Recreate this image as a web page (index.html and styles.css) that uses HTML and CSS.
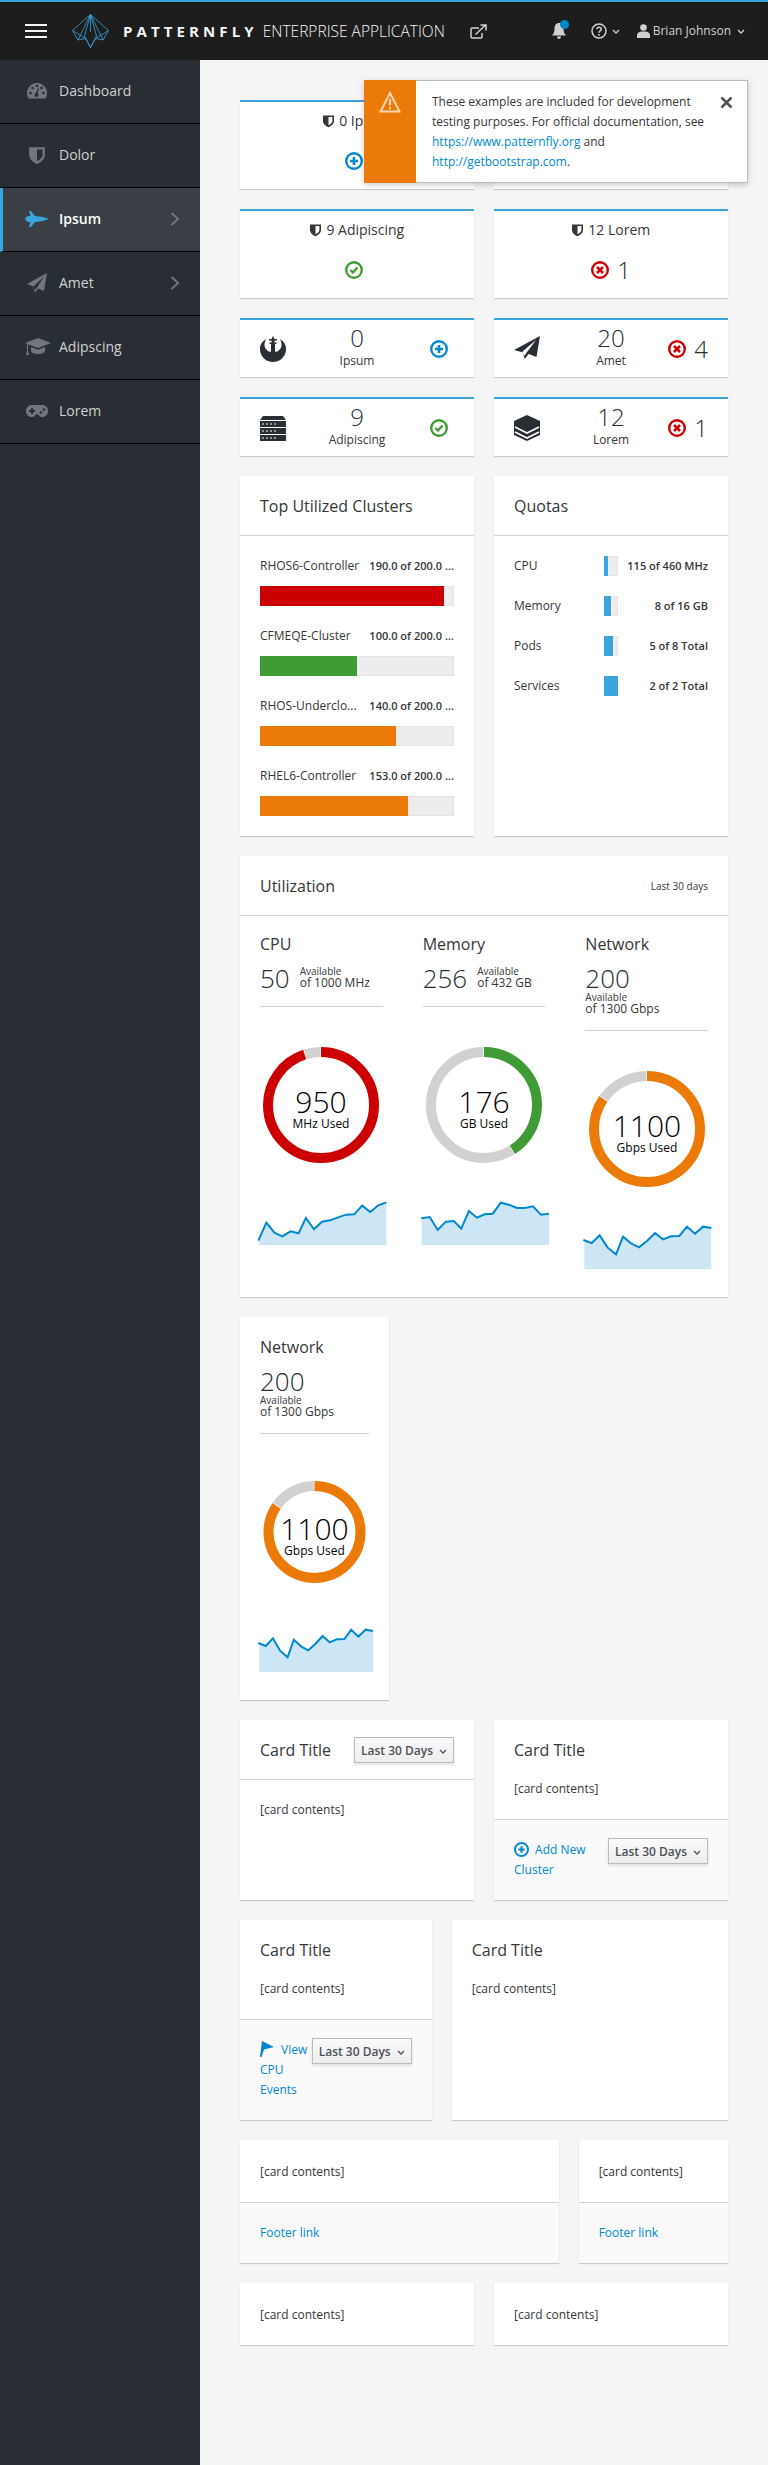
FILE: index.html
```html
<!DOCTYPE html>
<html lang="en">
<head>
    <meta charset="UTF-8">
    <title>Cards</title>
    <link rel="stylesheet" href="styles.css">
</head>
<body>
    <header class="topbar">
        <div class="hamburger"><span></span><span></span><span></span></div>
        <svg class="logo" viewBox="0 0 37 34" fill="none" stroke="#39a5dc" stroke-width="0.8">
            <path d="M18.500 0.500L36.500 16.500 31 26 23.500 24.500 18.500 33.500 13.500 24.500 6 26 0.500 16.500z"/>
            <path d="M18.500 0.500L6 26M18.500 0.500L12.500 22 18.500 33.500 24.500 22zM18.500 0.500L31 26M18.500 0.500V18"/>
            <path d="M0.500 16.500L13.500 24.500M36.500 16.500L23.500 24.500"/>
        </svg>
        <span class="brand-name">PATTERNFLY</span>
        <span class="brand-app">ENTERPRISE APPLICATION</span>
        <svg class="ext-link" viewBox="0 0 17 15" fill="none" stroke="#d1d1d1" stroke-width="1.500">
            <path d="M9 4H2a1 1 0 0 0-1 1v8a1 1 0 0 0 1 1h9a1 1 0 0 0 1-1V9"/>
            <path d="M5.500 10.500L15 1.500M10.500 1H16V6.500"/>
        </svg>
        <div class="nav-right">
            <span class="bell">
                <svg viewBox="0 0 16 18" fill="#d1d1d1"><path d="M8 1c3 0 4.500 2.500 4.500 5.500 0 4 1 5.500 2.500 7H1c1.500-1.500 2.500-3 2.500-7C3.500 3.500 5 1 8 1zM6 14.500h4c0 1.500-1 2.500-2 2.500s-2-1-2-2.500z"/></svg>
                <i class="bell-dot"></i>
            </span>
            <span class="help">
                <svg viewBox="0 0 16 16" fill="none" stroke="#d1d1d1" stroke-width="1.500"><circle cx="8" cy="8" r="7"/><path d="M5.800 6.200C6 4.800 7 4.200 8 4.200c1.300 0 2.300 .8 2.300 2 0 1.800-2.300 1.800-2.300 3.500"/><path d="M8 11v1.800"/></svg>
                <svg class="caret" viewBox="0 0 8 5" fill="none" stroke="#d1d1d1" stroke-width="1.300"><path d="M1 1l3 3 3-3"/></svg>
            </span>
            <span class="user">
                <svg viewBox="0 0 13 14" fill="#d1d1d1"><circle cx="6.500" cy="3.500" r="3.300"/><path d="M0 14v-3c0-2 2-3 4-3.500h5c2 .5 4 1.500 4 3.500v3z"/></svg>
                Brian Johnson
                <svg class="caret" viewBox="0 0 8 5" fill="none" stroke="#d1d1d1" stroke-width="1.300"><path d="M1 1l3 3 3-3"/></svg>
            </span>
        </div>
    </header>

    <div class="layout">
        <nav class="sidebar">
            <a class="nav-item">
                <svg class="nav-icon" viewBox="0 0 20 18"><path class="ic" d="M10 1C4.500 1 0 5.500 0 11c0 2 .5 4 1.500 5.500h17C19.500 15 20 13 20 11 20 5.500 15.500 1 10 1z"/><g fill="#292e34"><circle cx="3.500" cy="11" r="1.300"/><circle cx="5.500" cy="6" r="1.300"/><circle cx="10" cy="4" r="1.300"/><circle cx="16.500" cy="11" r="1.300"/><circle cx="14.500" cy="6" r="1.300"/><circle cx="9.500" cy="13" r="2"/><path d="M8.500 12.500L11 6l.8 .3-1.300 6.700z"/></g></svg>
                Dashboard
            </a>
            <a class="nav-item">
                <svg class="nav-icon shield-nav" viewBox="0 0 14 16"><use href="#shield"/></svg>
                Dolor
            </a>
            <a class="nav-item active">
                <svg class="nav-icon" viewBox="0 0 24 16"><path d="M4 0h2l4 5 7 .8L24 8l-7 2.200-7 .8-4 5H4l1.500-5H3L1.500 10 0 8l1.500-2L3 5h2.500z" fill="#39a5dc"/></svg>
                Ipsum
                <svg class="chevron" viewBox="0 0 10 14"><path d="M1.500 1l6.500 6-6.500 6"/></svg>
            </a>
            <a class="nav-item">
                <svg class="nav-icon tall" viewBox="0 0 20 20"><path class="ic" d="M20 0L17 18l-6-2.500L8 20l-1.500-6.500L0 11zM17 3.500L6.500 13.500 8 17l2-2.500z"/></svg>
                Amet
                <svg class="chevron" viewBox="0 0 10 14"><path d="M1.500 1l6.500 6-6.500 6"/></svg>
            </a>
            <a class="nav-item">
                <svg class="nav-icon wide" viewBox="0 0 26 18"><path class="ic" d="M13 0l13 5-13 5L3 6.200V13l1 4H1l1-4V5.800L0 5zM6 9l7 2.700L20 9v3.500c0 2-3 3.500-7 3.500s-7-1.500-7-3.500z"/></svg>
                Adipscing
            </a>
            <a class="nav-item">
                <svg class="nav-icon pad" viewBox="0 0 22 12"><path class="ic" d="M6 0h10c3.500 0 6 2.500 6 6s-2.500 6-6 6c-2 0-3-1.500-4-2.500h-2C9 10.500 8 12 6 12c-3.500 0-6-2.500-6-6s2.500-6 6-6z"/><path fill="#292e34" d="M5 3h2v2h2v2H7v2H5V7H3V5h2z"/><circle cx="15" cy="7.500" r="1.300" fill="#292e34"/><circle cx="18" cy="4.500" r="1.300" fill="#292e34"/></svg>
                Lorem
            </a>
        </nav>

        <main class="content">
            <div class="row">
                <section class="card accent col-6">
                    <h2 class="agg-title"><svg class="shield" viewBox="0 0 14 16"><use href="#shield"/></svg> 0 Ipsum</h2>
                    <div class="agg-body"><svg class="status" viewBox="0 0 18 18"><use href="#add-o"/></svg></div>
                </section>
                <section class="card accent col-6">
                    <h2 class="agg-title"><svg class="shield" viewBox="0 0 14 16"><use href="#shield"/></svg> 20 Amet</h2>
                    <div class="agg-body"><svg class="status" viewBox="0 0 18 18"><use href="#error-o"/></svg><span class="count">4</span></div>
                </section>
            </div>

            <div class="row">
                <section class="card accent col-6">
                    <h2 class="agg-title"><svg class="shield" viewBox="0 0 14 16"><use href="#shield"/></svg> 9 Adipiscing</h2>
                    <div class="agg-body"><svg class="status" viewBox="0 0 18 18"><use href="#ok-o"/></svg></div>
                </section>
                <section class="card accent col-6">
                    <h2 class="agg-title"><svg class="shield" viewBox="0 0 14 16"><use href="#shield"/></svg> 12 Lorem</h2>
                    <div class="agg-body"><svg class="status" viewBox="0 0 18 18"><use href="#error-o"/></svg><span class="count">1</span></div>
                </section>
            </div>

            <div class="row">
                <section class="card accent mini col-6">
                    <svg class="mini-icon" viewBox="0 0 26 26"><path d="M6 3C1 6 0 10 0 13a13 13 0 0 0 26 0C26 10 25 6 20 3 22 7 22 11 20 13 18 16 16 16 15 15.500V8h1.500V6.500h-2v-2H17V3h-2.500L13 0l-1.500 3H9v1.500h2.500v2h-2V8H11v7.500C10 16 8 16 6 13 4 11 4 7 6 3z"/></svg>
                    <div class="mini-center"><div class="mini-num">0</div><div class="mini-label">Ipsum</div></div>
                    <div class="mini-right"><svg class="status" viewBox="0 0 18 18"><use href="#add-o"/></svg></div>
                </section>
                <section class="card accent mini col-6">
                    <svg class="mini-icon" viewBox="0 0 26 26"><path d="M26 0L22.500 21 14.800 18 10.500 23 9 16.500 0 14zM22 4L8.500 15.500 10.500 20 12.500 16.800z"/></svg>
                    <div class="mini-center"><div class="mini-num">20</div><div class="mini-label">Amet</div></div>
                    <div class="mini-right"><svg class="status" viewBox="0 0 18 18"><use href="#error-o"/></svg><span class="count">4</span></div>
                </section>
            </div>

            <div class="row">
                <section class="card accent mini col-6">
                    <svg class="mini-icon" viewBox="0 0 26 26"><path d="M3 1h20l3 4H0zM0 6h26v6H0zM0 13h26v6H0zM0 20h26v6H0z"/><g fill="#fff"><rect x="2" y="8.500" width="2" height="1"/><rect x="6" y="8.500" width="2" height="1"/><rect x="10" y="8.500" width="2" height="1"/><rect x="14" y="8.500" width="2" height="1"/><rect x="2" y="15.500" width="2" height="1"/><rect x="6" y="15.500" width="2" height="1"/><rect x="10" y="15.500" width="2" height="1"/><rect x="14" y="15.500" width="2" height="1"/><rect x="2" y="22.500" width="2" height="1"/><rect x="6" y="22.500" width="2" height="1"/><rect x="10" y="22.500" width="2" height="1"/><rect x="14" y="22.500" width="2" height="1"/></g></svg>
                    <div class="mini-center"><div class="mini-num">9</div><div class="mini-label">Adipiscing</div></div>
                    <div class="mini-right"><svg class="status" viewBox="0 0 18 18"><use href="#ok-o"/></svg></div>
                </section>
                <section class="card accent mini col-6">
                    <svg class="mini-icon" viewBox="0 0 26 26"><path d="M13 0l13 6v14l-13 6L0 20V6z"/><path d="M1 12l12 6 12-6M1 17l12 6 12-6" fill="none" stroke="#fff" stroke-width="1.600"/></svg>
                    <div class="mini-center"><div class="mini-num">12</div><div class="mini-label">Lorem</div></div>
                    <div class="mini-right"><svg class="status" viewBox="0 0 18 18"><use href="#error-o"/></svg><span class="count">1</span></div>
                </section>
            </div>

            <div class="row">
                <section class="card col-6">
                    <div class="card-heading bordered"><h2 class="card-title">Top Utilized Clusters</h2></div>
                    <div class="card-body">
                        <div class="cluster">
                            <div class="cluster-text"><span class="cluster-name">RHOS6-Controller</span><strong class="cluster-val">190.0 of 200.0 ...</strong></div>
                            <div class="bar"><div class="bar-fill red" style="width: 95%"></div></div>
                        </div>
                        <div class="cluster">
                            <div class="cluster-text"><span class="cluster-name">CFMEQE-Cluster</span><strong class="cluster-val">100.0 of 200.0 ...</strong></div>
                            <div class="bar"><div class="bar-fill green" style="width: 50%"></div></div>
                        </div>
                        <div class="cluster">
                            <div class="cluster-text"><span class="cluster-name">RHOS-Underclo...</span><strong class="cluster-val">140.0 of 200.0 ...</strong></div>
                            <div class="bar"><div class="bar-fill orange" style="width: 70%"></div></div>
                        </div>
                        <div class="cluster">
                            <div class="cluster-text"><span class="cluster-name">RHEL6-Controller</span><strong class="cluster-val">153.0 of 200.0 ...</strong></div>
                            <div class="bar"><div class="bar-fill orange" style="width: 76.5%"></div></div>
                        </div>
                    </div>
                </section>
                <section class="card col-6">
                    <div class="card-heading bordered"><h2 class="card-title">Quotas</h2></div>
                    <div class="card-body quotas">
                        <div class="quota"><span class="quota-name">CPU</span><div class="quota-bar"><div class="quota-fill" style="height: 100%; width: 25%"></div></div><strong class="quota-val">115 of 460 MHz</strong></div>
                        <div class="quota"><span class="quota-name">Memory</span><div class="quota-bar"><div class="quota-fill" style="height: 100%; width: 50%"></div></div><strong class="quota-val">8 of 16 GB</strong></div>
                        <div class="quota"><span class="quota-name">Pods</span><div class="quota-bar"><div class="quota-fill" style="height: 100%; width: 62.5%"></div></div><strong class="quota-val">5 of 8 Total</strong></div>
                        <div class="quota"><span class="quota-name">Services</span><div class="quota-bar"><div class="quota-fill" style="height: 100%; width: 100%"></div></div><strong class="quota-val">2 of 2 Total</strong></div>
                    </div>
                </section>
            </div>

            <div class="row">
                <section class="card util-card col-12">
                    <div class="card-heading bordered util-heading"><h2 class="card-title">Utilization</h2><span class="range">Last 30 days</span></div>
                    <div class="util-grid">
                        <div class="util-col">
                            <h3 class="util-title">CPU</h3>
                            <div class="util-details"><span class="util-count">50</span><span class="util-avail"><b>Available</b>of 1000 MHz</span></div>
                            <svg class="donut" viewBox="0 0 116 116">
                                <circle class="track" cx="58" cy="58" r="53" pathLength="100" stroke-dasharray="4.600 95.400" stroke-dashoffset="-95.200" transform="rotate(-90 58 58)"/>
                                <circle stroke="#cc0000" fill="none" stroke-width="10" cx="58" cy="58" r="53" pathLength="100" stroke-dasharray="95 5" transform="rotate(-90 58 58)"/>
                                <text class="donut-num" x="58" y="66">950</text>
                                <text class="donut-unit" x="58" y="81">MHz Used</text>
                            </svg>
                            <svg class="spark" viewBox="84 1005 384 180" preserveAspectRatio="none">
                                <polygon class="spark-area" points="87,1172 109,1118 133,1148 157,1159 181,1144 205,1150 227,1104 251,1138 275,1115 299,1111 323,1102 347,1094 371,1093 395,1067 419,1086 443,1066 467,1057 467,1185 87,1185"/>
                                <polyline class="spark-line" points="85,1172 109,1118 133,1148 157,1159 181,1144 205,1150 227,1104 251,1138 275,1115 299,1111 323,1102 347,1094 371,1093 395,1067 419,1086 443,1066 467,1057"/>
                            </svg>
                        </div>
                        <div class="util-col">
                            <h3 class="util-title">Memory</h3>
                            <div class="util-details"><span class="util-count">256</span><span class="util-avail"><b>Available</b>of 432 GB</span></div>
                            <svg class="donut" viewBox="0 0 116 116">
                                <circle class="track" cx="58" cy="58" r="53" pathLength="100" stroke-dasharray="58.600 41.400" stroke-dashoffset="-41.200" transform="rotate(-90 58 58)"/>
                                <circle stroke="#3f9c35" fill="none" stroke-width="10" cx="58" cy="58" r="53" pathLength="100" stroke-dasharray="41 59" transform="rotate(-90 58 58)"/>
                                <text class="donut-num" x="58" y="66">176</text>
                                <text class="donut-unit" x="58" y="81">GB Used</text>
                            </svg>
                            <svg class="spark" viewBox="572 1005 384 180" preserveAspectRatio="none">
                                <polygon class="spark-area" points="574,1105 598,1101 622,1140 646,1115 670,1113 692,1136 715,1083 739,1103 762,1093 786,1091 810,1058 834,1064 858,1074 882,1074 906,1069 930,1094 954,1091 954,1185 574,1185"/>
                                <polyline class="spark-line" points="573,1105 598,1101 622,1140 646,1115 670,1113 692,1136 715,1083 739,1103 762,1093 786,1091 810,1058 834,1064 858,1074 882,1074 906,1069 930,1094 954,1091"/>
                            </svg>
                        </div>
                        <div class="util-col">
                            <h3 class="util-title">Network</h3>
                            <div class="util-details"><span class="util-count">200</span><span class="util-avail"><b>Available</b>of 1300 Gbps</span></div>
                            <svg class="donut" viewBox="0 0 116 116">
                                <circle class="track" cx="58" cy="58" r="53" pathLength="100" stroke-dasharray="15 85" stroke-dashoffset="-84.800" transform="rotate(-90 58 58)"/>
                                <circle stroke="#ec7a08" fill="none" stroke-width="10" cx="58" cy="58" r="53" pathLength="100" stroke-dasharray="84.600 15.400" transform="rotate(-90 58 58)"/>
                                <text class="donut-num" x="58" y="66">1100</text>
                                <text class="donut-unit" x="58" y="81">Gbps Used</text>
                            </svg>
                            <svg class="spark" viewBox="1058 1077 386 180" preserveAspectRatio="none">
                                <polygon class="spark-area" points="1062,1171 1084,1179 1108,1156 1132,1193 1157,1213 1178,1160 1202,1180 1226,1192 1250,1173 1274,1149 1298,1168 1322,1159 1347,1158 1370,1130 1394,1151 1418,1130 1443,1134 1443,1257 1062,1257"/>
                                <polyline class="spark-line" points="1059,1170 1084,1179 1108,1156 1132,1193 1157,1213 1178,1160 1202,1180 1226,1192 1250,1173 1274,1149 1298,1168 1322,1159 1347,1158 1370,1130 1394,1151 1418,1130 1443,1134"/>
                            </svg>
                        </div>
                    </div>
                </section>
            </div>

            <div class="row">
                <section class="card col-4 util-single">
                    <div class="util-col">
                        <h3 class="util-title">Network</h3>
                        <div class="util-details"><span class="util-count">200</span><span class="util-avail"><b>Available</b>of 1300 Gbps</span></div>
                        <svg class="donut" viewBox="0 0 109 116">
                            <circle class="track" stroke-width="10" cx="54.500" cy="58" r="46" pathLength="100" stroke-dasharray="15 85" stroke-dashoffset="-84.800" transform="rotate(-90 54.500 58)"/>
                            <circle stroke="#ec7a08" fill="none" stroke-width="10" cx="54.500" cy="58" r="46" pathLength="100" stroke-dasharray="84.600 15.400" transform="rotate(-90 54.500 58)"/>
                            <text class="donut-num" x="54.500" y="66">1100</text>
                            <text class="donut-unit" x="54.500" y="81">Gbps Used</text>
                        </svg>
                        <svg class="spark" viewBox="1058 1077 386 180" preserveAspectRatio="none">
                            <polygon class="spark-area" points="1062,1171 1084,1179 1108,1156 1132,1193 1157,1213 1178,1160 1202,1180 1226,1192 1250,1173 1274,1149 1298,1168 1322,1159 1347,1158 1370,1130 1394,1151 1418,1130 1443,1134 1443,1257 1062,1257"/>
                            <polyline class="spark-line" points="1059,1170 1084,1179 1108,1156 1132,1193 1157,1213 1178,1160 1202,1180 1226,1192 1250,1173 1274,1149 1298,1168 1322,1159 1347,1158 1370,1130 1394,1151 1418,1130 1443,1134"/>
                        </svg>
                    </div>
                </section>
            </div>

            <div class="row">
                <section class="card col-6">
                    <div class="card-heading bordered"><button class="drop">Last 30 Days <svg class="drop-caret" viewBox="0 0 8 5"><path d="M1 1l3 3 3-3"/></svg></button><h2 class="card-title">Card Title</h2></div>
                    <div class="card-body">[card contents]</div>
                </section>
                <section class="card with-footer col-6">
                    <div class="card-heading"><h2 class="card-title">Card Title</h2></div>
                    <div class="card-body tight">[card contents]</div>
                    <div class="card-footer">
                        <button class="drop">Last 30 Days <svg class="drop-caret" viewBox="0 0 8 5"><path d="M1 1l3 3 3-3"/></svg></button>
                        <a class="link"><svg class="link-icon" viewBox="0 0 18 18"><use href="#add-o"/></svg> Add New Cluster</a>
                    </div>
                </section>
            </div>

            <div class="row">
                <section class="card with-footer col-5">
                    <div class="card-heading"><h2 class="card-title">Card Title</h2></div>
                    <div class="card-body tight">[card contents]</div>
                    <div class="card-footer">
                        <button class="drop">Last 30 Days <svg class="drop-caret" viewBox="0 0 8 5"><path d="M1 1l3 3 3-3"/></svg></button>
                        <a class="link"><svg class="link-icon flag" viewBox="0 0 14 16"><path d="M2 0l12 6-10 2.500L1.500 16H0z" fill="#0088ce"/></svg> View CPU Events</a>
                    </div>
                </section>
                <section class="card col-7">
                    <div class="card-heading"><h2 class="card-title">Card Title</h2></div>
                    <div class="card-body tight">[card contents]</div>
                </section>
            </div>

            <div class="row">
                <section class="card with-footer col-8">
                    <div class="card-body plain">[card contents]</div>
                    <div class="card-footer"><a class="link">Footer link</a></div>
                </section>
                <section class="card with-footer col-4">
                    <div class="card-body plain">[card contents]</div>
                    <div class="card-footer"><a class="link">Footer link</a></div>
                </section>
            </div>

            <div class="row">
                <section class="card col-6"><div class="card-body plain">[card contents]</div></section>
                <section class="card col-6"><div class="card-body plain">[card contents]</div></section>
            </div>
        </main>
    </div>

    <div class="toast">
        <div class="toast-side">
            <svg viewBox="0 0 22 22" fill="none" stroke="#fbd7b0" stroke-width="2"><path d="M11 2L20.500 20.500H1.500z"/><path d="M11 8v6.500M11 16v2.200" stroke-width="2.200"/></svg>
        </div>
        <div class="toast-text">These examples are included for development testing purposes. For official documentation, see <a>https://www.patternfly.org</a> and <a>http://getbootstrap.com</a>.</div>
        <svg class="toast-close" viewBox="0 0 13 13"><path d="M1.500 1.500l10 10M11.500 1.500l-10 10"/></svg>
    </div>

    <svg class="defs" width="0" height="0">
        <defs>
            <g id="shield">
                <path fill-rule="evenodd" d="M0 1h14v7c0 3.500-3.500 6.500-7 8-3.500-1.500-7-4.500-7-8zM7 3v10.500c2.200-1.200 5-3.300 5-5.500V3z"/>
            </g>
            <g id="add-o">
                <circle cx="9" cy="9" r="7.800" fill="none" stroke="#0088ce" stroke-width="2.400"/>
                <path d="M9 5v8M5 9h8" stroke="#0088ce" stroke-width="2.600"/>
            </g>
            <g id="error-o">
                <circle cx="9" cy="9" r="7.800" fill="none" stroke="#cc0000" stroke-width="2.400"/>
                <path d="M6 6l6 6M12 6l-6 6" stroke="#cc0000" stroke-width="2.600"/>
            </g>
            <g id="ok-o">
                <circle cx="9" cy="9" r="7.800" fill="none" stroke="#3f9c35" stroke-width="2.400"/>
                <path d="M5.500 9l2.500 2.500 4.500-5" fill="none" stroke="#3f9c35" stroke-width="2.400"/>
            </g>
        </defs>
    </svg>
</body>
</html>
```

FILE: styles.css
```css
* {
    margin: 0;
    padding: 0;
    box-sizing: border-box;
}

body {
    background: #f5f5f5;
    color: #363636;
    font-family: 'Open Sans', sans-serif;
    font-size: 12px;
    line-height: 20px;
    min-height: 100vh;
    position: relative;
}

.defs {
    position: absolute;
}

/* top bar */
.topbar {
    height: 60px;
    background: #1d1d1d;
    border-top: 2px solid #39a5dc;
    display: flex;
    align-items: center;
    color: #f5f5f5;
}

.hamburger {
    width: 22px;
    margin-left: 25px;
    display: flex;
    flex-direction: column;
    gap: 4px;
}

.hamburger span {
    height: 2px;
    background: #f5f5f5;
}

.logo {
    width: 37px;
    height: 34px;
    margin-left: 25px;
}

.brand-name {
    font-size: 15px;
    font-weight: 700;
    letter-spacing: 4.1px;
    margin-left: 14px;
}

.brand-app {
    font-size: 15.5px;
    font-weight: 300;
    margin-left: 5px;
    white-space: nowrap;
}

.ext-link {
    width: 17px;
    height: 15px;
    margin-left: 25px;
}

.nav-right {
    margin-left: auto;
    display: flex;
    align-items: center;
    color: #d1d1d1;
    padding-right: 23px;
}

.bell {
    position: relative;
    display: flex;
    width: 16px;
    margin-right: 24px;
}

.bell svg {
    width: 16px;
    height: 18px;
}

.bell-dot {
    position: absolute;
    top: -2px;
    right: -2px;
    width: 9px;
    height: 9px;
    border-radius: 50%;
    background: #0088ce;
}

.help {
    display: flex;
    align-items: center;
    margin-right: 17px;
}

.help svg:first-child {
    width: 16px;
    height: 16px;
}

.caret {
    width: 8px;
    height: 5px;
    margin-left: 5px;
}

.user {
    display: flex;
    align-items: center;
    gap: 3px;
}

.user svg:first-child {
    width: 13px;
    height: 14px;
}

.user .caret {
    margin-left: 3px;
}

/* side navigation */
.layout {
    display: flex;
    min-height: calc(100vh - 60px);
}

.sidebar {
    width: 200px;
    flex: none;
    background: #292e34;
}

.nav-item {
    height: 64px;
    border-bottom: 1px solid #030303;
    display: flex;
    align-items: center;
    position: relative;
    padding-left: 59px;
    padding-bottom: 2px;
    color: #d1d1d1;
    font-size: 14px;
}

.nav-item.active {
    background: #393f44;
    border-left: 3px solid #39a5dc;
    padding-left: 56px;
    color: #fff;
    font-weight: 600;
}

.nav-icon {
    position: absolute;
    left: 27px;
    top: calc(50% - 1px);
    width: 20px;
    height: 18px;
    transform: translateY(-50%);
}

.active .nav-icon {
    left: 22px;
    width: 24px;
}

.nav-icon.tall {
    height: 20px;
}

.nav-icon.wide {
    left: 25px;
    width: 26px;
}

.nav-icon.pad {
    left: 26px;
    width: 22px;
    height: 12px;
}

.nav-icon .ic,
.shield-nav {
    fill: #72767b;
}

.chevron {
    position: absolute;
    left: 170px;
    top: calc(50% - 1px);
    width: 10px;
    height: 14px;
    transform: translateY(-50%);
    fill: none;
    stroke: #72767b;
    stroke-width: 2;
}

.active .chevron {
    left: 167px;
}

/* cards */
.content {
    flex: 1;
    padding: 40px 40px 0;
    display: flex;
    flex-direction: column;
    gap: 20px;
    min-width: 0;
}

.row {
    display: grid;
    grid-template-columns: repeat(12, 1fr);
    gap: 20px;
}

.col-4 { grid-column: span 4; }
.col-5 { grid-column: span 5; }
.col-6 { grid-column: span 6; }
.col-7 { grid-column: span 7; }
.col-8 { grid-column: span 8; }
.col-12 { grid-column: span 12; }

.card {
    background: #fff;
    border-top: 2px solid transparent;
    box-shadow: 0 1px 1px rgba(3, 3, 3, 0.175);
    min-width: 0;
}

.card.accent {
    border-top-color: #39a5dc;
}

.agg-title {
    font-size: 14px;
    font-weight: 400;
    line-height: 16px;
    padding-top: 11px;
    text-align: center;
}

.shield {
    width: 11px;
    height: 14px;
    vertical-align: -2px;
    fill: #363636;
    margin-right: 2px;
}

.agg-body {
    height: 34px;
    margin-top: 15px;
    margin-bottom: 11px;
    display: flex;
    justify-content: center;
    align-items: center;
}

.status {
    width: 18px;
    height: 18px;
    margin-right: 6px;
    flex: none;
}

.count {
    font-size: 24px;
    font-weight: 300;
    line-height: 34px;
    margin-left: 2px;
    color: #292e34;
}

.mini {
    display: grid;
    grid-template-columns: 1fr 1fr 1fr;
    align-items: center;
    height: 59px;
    padding: 0 20px;
}

.mini-icon {
    width: 26px;
    height: 26px;
    fill: #292e34;
}

.mini-center {
    text-align: center;
    margin-top: -2px;
}

.mini-num {
    font-size: 24px;
    font-weight: 300;
    line-height: 26px;
    color: #292e34;
}

.mini-right {
    display: flex;
    justify-content: flex-end;
    align-items: center;
}

.mini-right .count {
    line-height: 30px;
}

.card-heading {
    padding: 19px 20px 20px;
}

.card-heading.bordered {
    border-bottom: 1px solid #d1d1d1;
}

.card-title {
    font-size: 16px;
    font-weight: 400;
    line-height: 18px;
}

.util-heading {
    display: flex;
    justify-content: space-between;
    align-items: center;
}

.range {
    font-size: 10px;
    line-height: 18px;
}

.card-body {
    padding: 20px;
}

.card-body.tight {
    padding-top: 0;
}

/* clusters */
.cluster {
    margin-bottom: 20px;
}

.cluster:last-child {
    margin-bottom: 0;
}

.cluster-text {
    display: flex;
    justify-content: space-between;
    margin-bottom: 10px;
}

.cluster-name {
    white-space: nowrap;
}

.cluster-val {
    font-size: 11px;
    font-weight: 600;
    white-space: nowrap;
}

.bar {
    height: 20px;
    background: #ededed;
    box-shadow: inset 0 0 1px rgba(0, 0, 0, 0.35);
}

.bar-fill {
    height: 100%;
}

.red { background: #cc0000; }
.green { background: #3f9c35; }
.orange { background: #ec7a08; }

/* quotas */
.quotas {
    display: flex;
    flex-direction: column;
    gap: 20px;
}

.quota {
    display: flex;
    align-items: center;
    height: 20px;
}

.quota-name {
    width: 90px;
    flex: none;
}

.quota-bar {
    width: 14px;
    height: 20px;
    background: #ededed;
    box-shadow: inset 0 0 1px rgba(0, 0, 0, 0.35);
}

.quota-fill {
    background: #39a5dc;
}

.quota-val {
    margin-left: auto;
    font-size: 11px;
    font-weight: 600;
}

/* utilization */
.util-grid {
    display: grid;
    grid-template-columns: repeat(3, 1fr);
}

.util-col {
    padding: 19px 20px 28px;
    min-width: 0;
}

.util-title {
    font-size: 16px;
    font-weight: 400;
    line-height: 18px;
    margin-bottom: 11px;
}

.util-details {
    display: flex;
    flex-wrap: wrap;
    align-items: center;
    column-gap: 10px;
    padding-bottom: 14px;
    border-bottom: 1px solid #d1d1d1;
}

.util-count {
    font-size: 26px;
    font-weight: 300;
    line-height: 28px;
    color: #292e34;
}

.util-avail {
    line-height: 14px;
    white-space: nowrap;
}

.util-avail b {
    display: block;
    font-size: 10px;
    font-weight: 400;
    line-height: 10px;
}

.donut {
    display: block;
    width: 116px;
    height: 116px;
    margin: 40px auto 0;
}

.util-single .donut {
    width: 109px;
}

.donut .track {
    fill: none;
    stroke: #d1d1d1;
    stroke-width: 10;
}

.donut-num {
    font-size: 30px;
    font-weight: 300;
    text-anchor: middle;
    fill: #030303;
}

.donut-unit {
    font-size: 12px;
    text-anchor: middle;
    fill: #030303;
}

.spark {
    display: block;
    width: calc(100% + 6px);
    height: 60px;
    margin: 22px -4px 0 -2px;
    overflow: visible;
}

.spark-area {
    fill: #cce6f5;
}

.spark-line {
    fill: none;
    stroke: #0088ce;
    stroke-width: 2px;
    vector-effect: non-scaling-stroke;
}

/* buttons and footers */
.drop {
    float: right;
    width: 100px;
    height: 26px;
    margin-top: -4px;
    border: 1px solid #bbb;
    background: linear-gradient(#fafafa, #ededed);
    box-shadow: 0 2px 3px rgba(3, 3, 3, 0.1);
    color: #4d5258;
    font-family: inherit;
    font-size: 12px;
    font-weight: 600;
    text-align: left;
    padding-left: 6px;
}

.drop-caret {
    width: 8px;
    height: 5px;
    margin-left: 3px;
    vertical-align: 1px;
    fill: none;
    stroke: #4d5258;
    stroke-width: 1.300;
}

.card-footer .drop {
    margin-top: -2px;
}

.card-footer {
    background: #fafafa;
    border-top: 1px solid #d1d1d1;
    padding: 20px;
}

.with-footer {
    display: flex;
    flex-direction: column;
}

.with-footer .card-footer {
    flex: 1;
}

.link {
    color: #0088ce;
}

.link-icon {
    width: 15px;
    height: 15px;
    margin-right: 3px;
    vertical-align: -3px;
}

.link-icon.flag {
    width: 14px;
    height: 16px;
    margin-right: 4px;
}

/* notification */
.toast {
    position: absolute;
    top: 80px;
    right: 20px;
    width: 384px;
    height: 103px;
    display: flex;
    background: #fff;
    border: 1px solid #bbb;
    box-shadow: 0 2px 6px rgba(3, 3, 3, 0.2);
}

.toast-side {
    width: 52px;
    flex: none;
    margin: -1px 0 -1px -1px;
    background: #ec7a08;
    display: flex;
    justify-content: center;
    padding-top: 11px;
}

.toast-side svg {
    width: 22px;
    height: 22px;
}

.toast-text {
    width: 276px;
    padding-top: 11px;
    margin-left: 16px;
}

.toast-text a {
    color: #0088ce;
}

.toast-close {
    position: absolute;
    top: 15px;
    right: 14px;
    width: 13px;
    height: 13px;
    fill: none;
    stroke: #4d5258;
    stroke-width: 2.500;
}
```
